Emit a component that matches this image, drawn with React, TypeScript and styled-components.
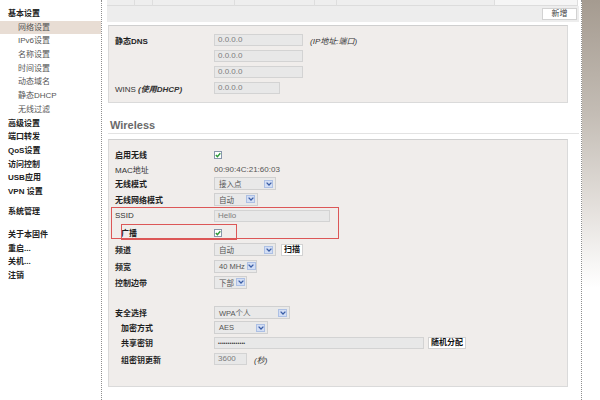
import * as React from 'react';
import styled, { createGlobalStyle } from 'styled-components';

const GlobalStyle = createGlobalStyle`
  html, body {
    margin: 0;
    padding: 0;
    background: #fff;
  }
  body {
    font-family: "Liberation Sans", "Noto Sans CJK SC", sans-serif;
    font-size: 8px;
    color: #222;
  }
  * {
    box-sizing: border-box;
  }
`;

const Page = styled.div`
  width: 600px;
  height: 400px;
  display: flex;
  overflow: hidden;
  background: #fff;
`;

/* ---------- sidebar ---------- */

const Sidebar = styled.nav`
  flex: 0 0 102px;
  border-right: 1px dotted #8f8f8f;
  padding-top: 7px;
  display: flex;
  flex-direction: column;
`;

const MenuItem = styled.div<{ $sub?: boolean; $active?: boolean; $gap?: number }>`
  height: 13.7px;
  line-height: 13.7px;
  margin-top: ${(p) => p.$gap ?? 0}px;
  padding-left: ${(p) => (p.$sub ? 18 : 8)}px;
  font-weight: ${(p) => (p.$sub ? 400 : 700)};
  color: ${(p) => (p.$sub ? '#555' : '#222')};
  background: ${(p) => (p.$active ? '#e8ddd4' : 'transparent')};
  white-space: nowrap;
`;

/* ---------- main column ---------- */

const Main = styled.main`
  flex: 0 0 480px;
  border-right: 1px dotted #8f8f8f;
  padding: 0 2px 0 5px;
  display: flex;
  flex-direction: column;
`;

const TopCells = styled.div`
  height: 6px;
  display: flex;
`;

const TopCell = styled.div<{ $w: number; $light?: boolean }>`
  flex: 0 0 ${(p) => p.$w}px;
  background: ${(p) => (p.$light ? '#f5f5f5' : '#eeeeee')};
  border-right: 1px solid #dedede;
  border-bottom: 1px solid #dcdcdc;
`;

const ActionBar = styled.div`
  height: 16px;
  background: #ededed;
  display: flex;
  align-items: center;
  justify-content: flex-end;
  padding-right: 2px;
`;

const SmallButton = styled.button<{ $bold?: boolean; $w?: number; $ml?: number }>`
  height: 12px;
  width: ${(p) => (p.$w ? `${p.$w}px` : 'auto')};
  margin-left: ${(p) => p.$ml ?? 0}px;
  padding: 0 2px;
  background: #fff;
  border: 1px solid #d2d2d2;
  font-family: "Liberation Sans", "Noto Sans CJK SC", sans-serif;
  font-size: 8px;
  font-weight: ${(p) => (p.$bold ? 700 : 400)};
  color: ${(p) => (p.$bold ? '#111' : '#444')};
  line-height: 10px;
  cursor: pointer;
`;

const Panel = styled.section<{ $pt: number; $pb: number; $mt: number }>`
  position: relative;
  margin: ${(p) => p.$mt}px 11px 0 1px;
  padding: ${(p) => p.$pt}px 0 ${(p) => p.$pb}px 6px;
  background: #f0edeb;
  border: 1px solid #dadada;
  border-top-color: #cfcfcf;
`;

const Row = styled.div<{ $h: number }>`
  height: ${(p) => p.$h}px;
  display: flex;
  align-items: center;
`;

const Label = styled.div<{ $bold?: boolean; $indent?: boolean }>`
  flex: 0 0 99px;
  padding-left: ${(p) => (p.$indent ? 6 : 0)}px;
  font-weight: ${(p) => (p.$bold ? 700 : 400)};
  color: ${(p) => (p.$bold ? '#1e1e1e' : '#333')};
  white-space: nowrap;
`;

const Em = styled.span`
  font-style: italic;
  font-weight: 700;
`;

const Note = styled.span`
  margin-left: 7px;
  font-style: italic;
  color: #333;
  white-space: nowrap;
`;

const Input = styled.div<{ $w: number }>`
  width: ${(p) => p.$w}px;
  height: 12px;
  border: 1px solid #d3d3d3;
  background: #e8e8e8;
  color: #7c7c7c;
  padding-left: 3px;
  line-height: 10px;
  white-space: nowrap;
  overflow: hidden;
`;

const Secret = styled.span`
  font-size: 5px;
  letter-spacing: 0.2px;
  color: #333;
`;

const Value = styled.span`
  color: #555;
`;

const SelectBox = styled.div<{ $w: number }>`
  width: ${(p) => p.$w}px;
  height: 13px;
  border: 1px solid #d0d0d0;
  background: #e9e9e9;
  display: flex;
  align-items: center;
  justify-content: space-between;
  gap: 2px;
  padding: 0 2px 0 4px;
  color: #555;
  font-size: 7.5px;
  white-space: nowrap;
  overflow: hidden;
`;

const ArrowBox = styled.span`
  flex: 0 0 9px;
  height: 8px;
  border: 1px solid #adc0e4;
  background: #d3def4;
  display: flex;
  align-items: center;
  justify-content: center;
`;

const CheckBox = styled.span`
  width: 8px;
  height: 8px;
  border: 1px solid #8796aa;
  background: #fff;
  display: flex;
  align-items: center;
  justify-content: center;
`;

const Heading = styled.h2`
  margin: 15px 0 0 1px;
  padding: 0 0 1px 2px;
  height: 16px;
  line-height: 14px;
  font-size: 11px;
  font-weight: 700;
  color: #6a6a6a;
  border-bottom: 1px solid #e3e3e3;
`;

const Spacer = styled.div<{ $h: number }>`
  height: ${(p) => p.$h}px;
`;

const Mark = styled.div<{ $l: number; $t: number; $w: number; $h: number }>`
  position: absolute;
  left: ${(p) => p.$l}px;
  top: ${(p) => p.$t}px;
  width: ${(p) => p.$w}px;
  height: ${(p) => p.$h}px;
  border: 1px solid #dc5757;
  pointer-events: none;
`;

/* ---------- right strip ---------- */

const SideGlow = styled.div`
  flex: 0 0 18px;
  background: linear-gradient(
    to bottom,
    #a59b90 0%,
    #c3bcb4 28%,
    #e4e0dc 52%,
    #f7f6f5 66%,
    #ffffff 72%
  );
`;

function Select({ w, children }: { w: number; children: React.ReactNode }) {
  return (
    <SelectBox $w={w}>
      <span>{children}</span>
      <ArrowBox>
        <svg width="6" height="4" viewBox="0 0 6 4">
          <path d="M0.6 0.6 L3 3 L5.4 0.6" fill="none" stroke="#3b5ea6" strokeWidth="1.3" />
        </svg>
      </ArrowBox>
    </SelectBox>
  );
}

function Check() {
  return (
    <CheckBox>
      <svg width="6" height="6" viewBox="0 0 6 6">
        <path d="M0.8 3 L2.4 4.6 L5.3 1.2" fill="none" stroke="#2e9a3a" strokeWidth="1.4" />
      </svg>
    </CheckBox>
  );
}

const topCells = [28, 18, 82, 80, 22, 158, 83];

export default function App() {
  return (
    <Page>
      <GlobalStyle />
      <Sidebar>
        <MenuItem>基本设置</MenuItem>
        <MenuItem $sub $active>网络设置</MenuItem>
        <MenuItem $sub>IPv6设置</MenuItem>
        <MenuItem $sub>名称设置</MenuItem>
        <MenuItem $sub>时间设置</MenuItem>
        <MenuItem $sub>动态域名</MenuItem>
        <MenuItem $sub>静态DHCP</MenuItem>
        <MenuItem $sub>无线过滤</MenuItem>
        <MenuItem>高级设置</MenuItem>
        <MenuItem>端口转发</MenuItem>
        <MenuItem>QoS设置</MenuItem>
        <MenuItem>访问控制</MenuItem>
        <MenuItem>USB应用</MenuItem>
        <MenuItem>VPN 设置</MenuItem>
        <MenuItem $gap={6.4}>系统管理</MenuItem>
        <MenuItem $gap={9.3}>关于本固件</MenuItem>
        <MenuItem>重启...</MenuItem>
        <MenuItem>关机...</MenuItem>
        <MenuItem>注销</MenuItem>
      </Sidebar>

      <Main>
        <TopCells>
          {topCells.map((w, i) => (
            <TopCell key={i} $w={w} $light={i === topCells.length - 1} />
          ))}
        </TopCells>
        <ActionBar>
          <SmallButton $w={35}>新增</SmallButton>
        </ActionBar>

        <Panel $mt={3} $pt={6} $pb={6}>
          <Row $h={16}>
            <Label $bold>静态DNS</Label>
            <Input $w={89}>0.0.0.0</Input>
            <Note>(IP地址:端口)</Note>
          </Row>
          <Row $h={16}>
            <Label />
            <Input $w={89}>0.0.0.0</Input>
          </Row>
          <Row $h={16}>
            <Label />
            <Input $w={89}>0.0.0.0</Input>
          </Row>
          <Row $h={16}>
            <Label>
              WINS <Em>(使用DHCP)</Em>
            </Label>
            <Input $w={66}>0.0.0.0</Input>
          </Row>
        </Panel>

        <Heading>Wireless</Heading>

        <Panel $mt={5} $pt={7} $pb={18}>
          <Row $h={15}>
            <Label $bold>启用无线</Label>
            <Check />
          </Row>
          <Row $h={14}>
            <Label>MAC地址</Label>
            <Value>00:90:4C:21:60:03</Value>
          </Row>
          <Row $h={15}>
            <Label $bold>无线模式</Label>
            <Select w={62}>接入点</Select>
          </Row>
          <Row $h={16}>
            <Label $bold>无线网络模式</Label>
            <Select w={44}>自动</Select>
          </Row>
          <Row $h={17}>
            <Label>SSID</Label>
            <Input $w={116}>Hello</Input>
          </Row>
          <Row $h={17}>
            <Label $bold $indent>广播</Label>
            <Check />
          </Row>
          <Row $h={17}>
            <Label $bold>频道</Label>
            <Select w={62}>自动</Select>
            <SmallButton $bold $ml={5}>扫描</SmallButton>
          </Row>
          <Row $h={16}>
            <Label $bold>频宽</Label>
            <Select w={43}>40 MHz</Select>
          </Row>
          <Row $h={16}>
            <Label $bold>控制边带</Label>
            <Select w={33}>下部</Select>
          </Row>
          <Spacer $h={15} />
          <Row $h={15}>
            <Label $bold>安全选择</Label>
            <Select w={76}>WPA个人</Select>
          </Row>
          <Row $h={15}>
            <Label $bold $indent>加密方式</Label>
            <Select w={54}>AES</Select>
          </Row>
          <Row $h={15}>
            <Label $bold $indent>共享密钥</Label>
            <Input $w={210}>
              <Secret>••••••••••••••</Secret>
            </Input>
            <SmallButton $bold $ml={4}>随机分配</SmallButton>
          </Row>
          <Row $h={18}>
            <Label $bold $indent>组密钥更新</Label>
            <Input $w={33}>3600</Input>
            <Note>(秒)</Note>
          </Row>

          <Mark $l={2} $t={67} $w={228} $h={32} />
          <Mark $l={12} $t={84} $w={116} $h={16} />
        </Panel>
      </Main>

      <SideGlow />
    </Page>
  );
}
